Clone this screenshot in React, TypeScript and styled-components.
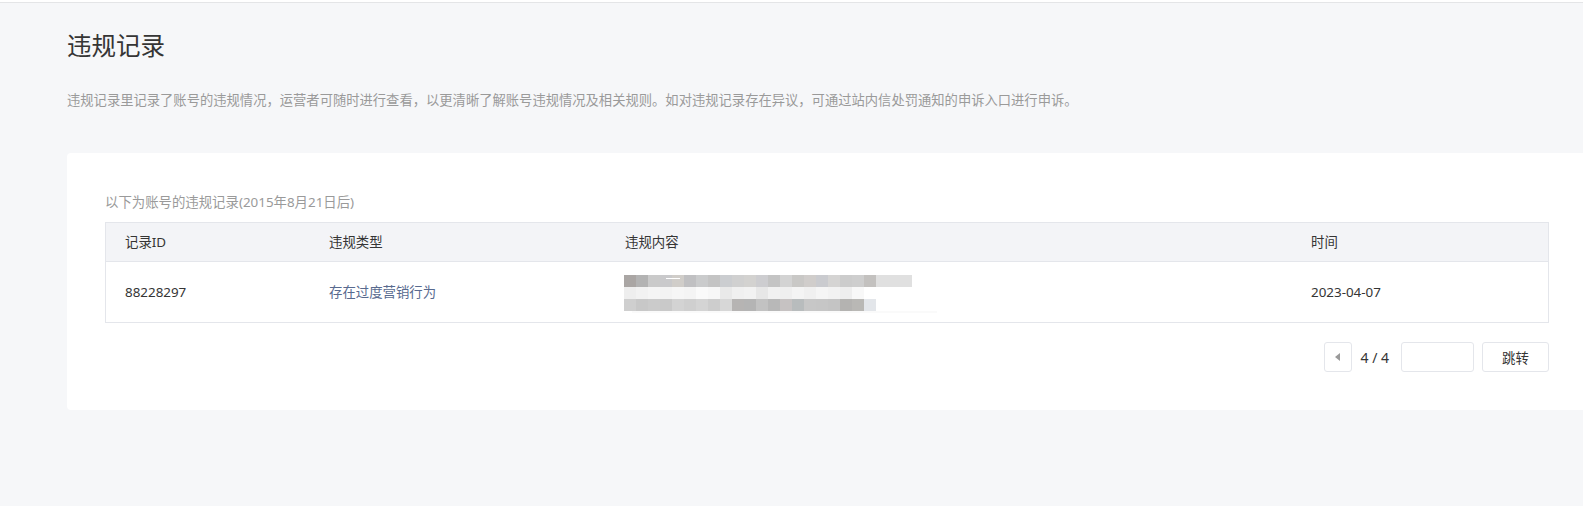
import React from "react";
import styled, { createGlobalStyle } from "styled-components";

const GlobalStyle = createGlobalStyle`
  html, body {
    margin: 0;
    padding: 0;
    background: #f6f7f9;
    overflow: hidden;
  }
  body {
    font-family: "Noto Sans", "Noto Sans CJK SC", sans-serif;
    color: #353535;
  }
  * { box-sizing: border-box; }
`;

const Page = styled.div`
  min-height: 506px;
  background: #f6f7f9;
`;

const TopBar = styled.div`
  height: 3px;
  background: #ffffff;
  border-bottom: 1px solid #e4e5e7;
`;

const Main = styled.main`
  padding-left: 67px;
  padding-bottom: 60px;
`;

const Title = styled.h1`
  margin: 26px 0 0;
  font-size: 24.5px;
  line-height: 34px;
  font-weight: 400;
  color: #353535;
`;

const Desc = styled.p`
  margin: 27px 0 0;
  font-size: 13.3px;
  line-height: 20px;
  color: #9a9a9a;
  white-space: nowrap;
`;

const Card = styled.section`
  margin-top: 43px;
  width: 1519px;
  background: #ffffff;
  border-radius: 4px;
  padding: 39px 38px 38px;
`;

const SubTitle = styled.div`
  font-size: 13.4px;
  line-height: 20px;
  color: #9a9a9a;
  margin-bottom: 10px;
`;

const Table = styled.div`
  border: 1px solid #e4e6eb;
  width: 1444px;
`;

const Row = styled.div<{ $head?: boolean }>`
  display: grid;
  grid-template-columns: 204px 296px 686px 1fr;
  align-items: center;
  height: ${(p) => (p.$head ? "38px" : "60px")};
  background: ${(p) => (p.$head ? "#f3f4f7" : "#ffffff")};
  border-bottom: ${(p) => (p.$head ? "1px solid #e4e6eb" : "none")};
  box-sizing: content-box;
`;

const Cell = styled.div<{ $link?: boolean }>`
  padding-left: 19px;
  font-size: 13.4px;
  line-height: 20px;
  color: ${(p) => (p.$link ? "#586a8f" : "#353535")};
  white-space: nowrap;
`;

const MosaicWrap = styled.div`
  padding: 13px 0 0 18px;
  display: flex;
  align-items: flex-start;
  align-self: stretch;
`;

const Pager = styled.div`
  display: flex;
  justify-content: flex-end;
  align-items: center;
  margin-top: 19px;
  width: 1444px;
`;

const PrevBtn = styled.button`
  width: 28px;
  height: 30px;
  border: 1px solid #e4e6eb;
  border-radius: 3px;
  background: #ffffff;
  padding: 0;
  display: flex;
  align-items: center;
  justify-content: center;
  &::before {
    content: "";
    display: block;
    width: 0;
    height: 0;
    border-top: 4px solid transparent;
    border-bottom: 4px solid transparent;
    border-right: 5px solid #9a9a9a;
    margin-right: 1px;
  }
`;

const PageText = styled.span`
  margin: 0 12px 0 8px;
  font-size: 14px;
  color: #353535;
  white-space: nowrap;
`;

const PageInput = styled.input`
  width: 73px;
  height: 30px;
  border: 1px solid #e4e6eb;
  border-radius: 3px;
  outline: none;
  background: #ffffff;
`;

const JumpBtn = styled.button`
  margin-left: 8px;
  width: 67px;
  height: 30px;
  border: 1px solid #e4e6eb;
  border-radius: 3px;
  background: #ffffff;
  font-family: "Noto Sans CJK SC", sans-serif;
  font-size: 13.4px;
  color: #353535;
  padding: 0;
`;

const row1 = [
  "#aaa6a4", "#b3b3b3", "#cacaca", "#c9c9cb", "#d0cdc9", "#c0c0c2", "#cacbcc", "#c4c4c4",
  "#cbcdd0", "#d0d0d0", "#d3d2d0", "#cdcdd0", "#c4c4c4", "#d3d3d3", "#c9c8c6", "#d0cdcb",
  "#cacbcf", "#d5d4d3", "#cccccc", "#cecece", "#c3c1bf", "#e0e0e0",
];
const row2 = [
  "#eeeeee", "#f2f2f2", "#f5f5f5", "#f3f3f3", "#f6f6f6", "#f4f4f4", "#fafafa", "#f7f7f7",
  "#e9e9e9", "#f0f0f0", "#f2f2f2", "#e7e7e7", "#f1f1f1", "#efefef", "#f4f4f4", "#f0f0f0",
  "#f5f5f5", "#f2f2f2", "#eeeeee", "#f8f8f8",
];
const row3 = [
  "#cfcfcf", "#c8c8c8", "#cbcbcb", "#c9c9c9", "#d3d3d3", "#cfcfcf", "#d4d4d4", "#cdcdcd",
  "#d7d7d7", "#b6b4b3", "#b4b4b4", "#c2c2c2", "#b8b8b8", "#c6c2c2", "#b8bcbd", "#c7c7c7",
  "#c6c6c6", "#c4c4c4", "#b4b3b1", "#b9b8b5", "#e3e6ea",
];

const Mosaic = () => (
  <svg width="320" height="40" viewBox="0 0 320 40">
    {row1.map((c, i) => (
      <rect key={"a" + i} x={i * 12} y={0} width={12} height={12} fill={c} />
    ))}
    <rect x={264} y={0} width={24} height={12} fill="#e0e0e0" />
    <rect x={42} y={3} width={14} height={1} fill="#ffffff" />
    {row2.map((c, i) => (
      <rect key={"b" + i} x={i * 12} y={12} width={12} height={12} fill={c} />
    ))}
    {row3.map((c, i) => (
      <rect key={"c" + i} x={i * 12} y={24} width={12} height={12} fill={c} />
    ))}
    <rect x={8} y={36} width={305} height={2} fill="#fafafa" />
  </svg>
);

export default function App() {
  return (
    <>
      <GlobalStyle />
      <Page>
        <TopBar />
        <Main>
          <Title>违规记录</Title>
          <Desc>
            违规记录里记录了账号的违规情况，运营者可随时进行查看，以更清晰了解账号违规情况及相关规则。如对违规记录存在异议，可通过站内信处罚通知的申诉入口进行申诉。
          </Desc>
          <Card>
            <SubTitle>以下为账号的违规记录(2015年8月21日后)</SubTitle>
            <Table>
              <Row $head>
                <Cell>记录ID</Cell>
                <Cell>违规类型</Cell>
                <Cell>违规内容</Cell>
                <Cell>时间</Cell>
              </Row>
              <Row>
                <Cell>88228297</Cell>
                <Cell $link>存在过度营销行为</Cell>
                <MosaicWrap>
                  <Mosaic />
                </MosaicWrap>
                <Cell>2023-04-07</Cell>
              </Row>
            </Table>
            <Pager>
              <PrevBtn aria-label="上一页" />
              <PageText>4 / 4</PageText>
              <PageInput />
              <JumpBtn>跳转</JumpBtn>
            </Pager>
          </Card>
        </Main>
      </Page>
    </>
  );
}
